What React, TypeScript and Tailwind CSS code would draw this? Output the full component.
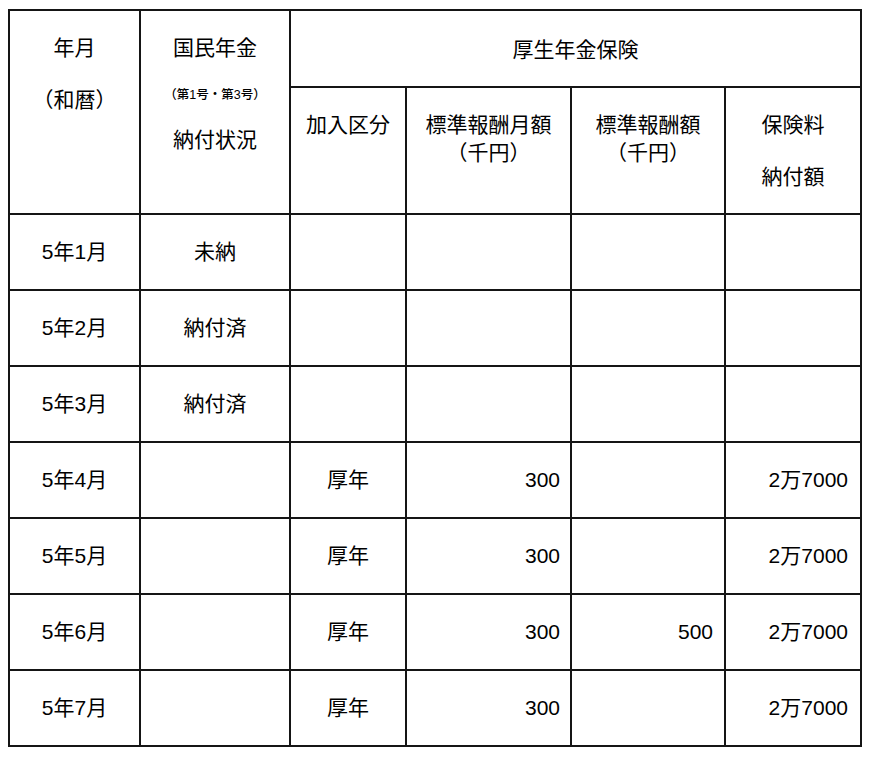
import React from "react";

const font = {
  fontFamily: '"Liberation Sans", "Noto Sans CJK JP", sans-serif',
};

const rows = [
  { m: "5年1月", n: "未納", k: "", a: "", b: "", f: "" },
  { m: "5年2月", n: "納付済", k: "", a: "", b: "", f: "" },
  { m: "5年3月", n: "納付済", k: "", a: "", b: "", f: "" },
  { m: "5年4月", n: "", k: "厚年", a: "300", b: "", f: "2万7000" },
  { m: "5年5月", n: "", k: "厚年", a: "300", b: "", f: "2万7000" },
  { m: "5年6月", n: "", k: "厚年", a: "300", b: "500", f: "2万7000" },
  { m: "5年7月", n: "", k: "厚年", a: "300", b: "", f: "2万7000" },
];

const cell = "border-r-2 border-b-2 border-[#151515]";

export default function App() {
  return (
    <div className="w-[870px] h-[757px] bg-white text-black pl-[8px] pt-[9px]" style={font}>
      <div className="grid grid-cols-[131px_150px_116px_165px_154px_136px] grid-rows-[77px_127px_repeat(7,76px)] w-max border-l-2 border-t-2 border-[#151515] text-[21px]">
        <div className={`${cell} row-span-2 flex flex-col items-center pt-[11px]`}>
          <div className="h-[52px] leading-[52px]">年月</div>
          <div className="h-[52px] leading-[52px]">（和暦）</div>
        </div>
        <div className={`${cell} row-span-2 flex flex-col items-center pt-[11px]`}>
          <div className="h-[52px] leading-[52px]">国民年金</div>
          <div className="h-[42px] leading-[42px] text-[12.5px] font-medium">（第1号・第3号）</div>
          <div className="h-[48px] leading-[48px]">納付状況</div>
        </div>
        <div className={`${cell} col-span-4 flex items-center justify-center pt-[2px]`}>
          厚生年金保険
        </div>
        <div className={`${cell} flex flex-col items-center pt-[23px]`}>
          <div className="h-[28px] leading-[28px]">加入区分</div>
        </div>
        <div className={`${cell} flex flex-col items-center pt-[23px]`}>
          <div className="h-[28px] leading-[28px]">標準報酬月額</div>
          <div className="h-[28px] leading-[28px]">（千円）</div>
        </div>
        <div className={`${cell} flex flex-col items-center pt-[23px]`}>
          <div className="h-[28px] leading-[28px]">標準報酬額</div>
          <div className="h-[28px] leading-[28px]">（千円）</div>
        </div>
        <div className={`${cell} flex flex-col items-center pt-[11px]`}>
          <div className="h-[52px] leading-[52px]">保険料</div>
          <div className="h-[52px] leading-[52px]">納付額</div>
        </div>
        {rows.map((r) => (
          <React.Fragment key={r.m}>
            <div className={`${cell} flex items-center justify-center`}>{r.m}</div>
            <div className={`${cell} flex items-center justify-center`}>{r.n}</div>
            <div className={`${cell} flex items-center justify-center`}>{r.k}</div>
            <div className={`${cell} flex items-center justify-end pr-[10px]`}>{r.a}</div>
            <div className={`${cell} flex items-center justify-end pr-[11px]`}>{r.b}</div>
            <div className={`${cell} flex items-center justify-end pr-[12px]`}>{r.f}</div>
          </React.Fragment>
        ))}
      </div>
    </div>
  );
}
